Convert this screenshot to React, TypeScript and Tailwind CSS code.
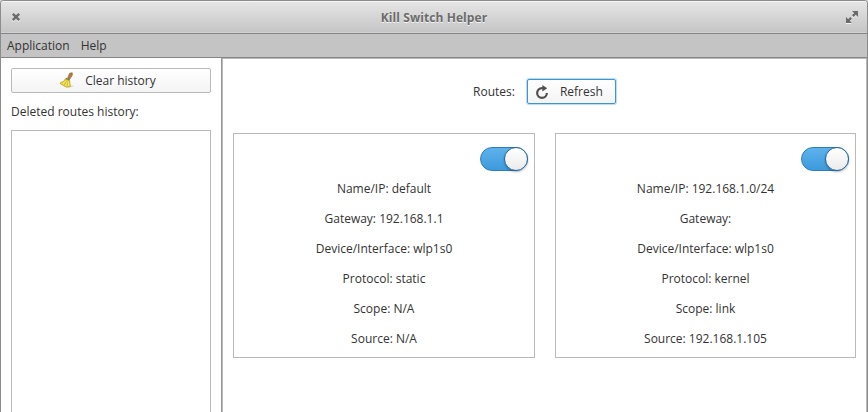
type Route = { name: string; gateway: string; device: string; protocol: string; scope: string; source: string };

const routes: Route[] = [
  { name: "default", gateway: "192.168.1.1", device: "wlp1s0", protocol: "static", scope: "N/A", source: "N/A" },
  { name: "192.168.1.0/24", gateway: "", device: "wlp1s0", protocol: "kernel", scope: "link", source: "192.168.1.105" },
];

function CloseIcon() {
  return (
    <svg className="h-[10px] w-[10px]" viewBox="0 0 10 10">
      <path d="M1.8 2.8 8.2 9.2M8.2 2.8 1.8 9.2" stroke="#f4f4f4" strokeWidth="2.2" />
      <path d="M1.8 1.8 8.2 8.2M8.2 1.8 1.8 8.2" stroke="#6b6b6b" strokeWidth="2.5" />
    </svg>
  );
}

function ExpandShape({ color }: { color: string }) {
  return (
    <g>
      <path d="M6 0h6v6zM0 6v6h6z" fill={color} />
      <path d="M6.8 5.2 10 2M5.2 6.8 2 10" stroke={color} strokeWidth="2.4" />
    </g>
  );
}

function ExpandIcon() {
  return (
    <svg className="h-[13px] w-[12px]" viewBox="0 0 12 13">
      <g transform="translate(0 1)"><ExpandShape color="#f4f4f4" /></g>
      <ExpandShape color="#6b6b6b" />
    </svg>
  );
}

function BroomIcon() {
  return (
    <svg className="h-4 w-4 -translate-y-px" viewBox="0 0 16 16">
      <ellipse cx="10" cy="14.2" rx="4.5" ry="1.1" fill="#dedede" />
      <path d="M10.5 1.2 13.2.7 13.4 3 10.8 7.2 8.7 6.2z" fill="#b57b3d" stroke="#946332" strokeWidth=".6" />
      <path d="M7.2 5.7 11 7.3 10.4 9 6.2 7.2z" fill="#777a54" />
      <path d="M6.2 7 10.7 8.8 11.3 14.7 7.5 15.2 1.4 11.8 1.5 10.5 4.5 9.5z" fill="#e9d43e" stroke="#b49f25" strokeWidth=".7" />
      <path d="m6.5 9-2.7 3M8 9.7l-1.2 4M9.5 10l-.2 4" stroke="#fff08a" strokeWidth=".8" />
      <path d="m7.3 9.3-2 3.7M8.8 10l-.8 4.3" stroke="#b8a528" strokeWidth=".5" />
    </svg>
  );
}

function RefreshIcon() {
  return (
    <svg className="h-[14px] w-[13px]" viewBox="0 0 13 14">
      <path d="M7.2 3.1H6a4.85 4.85 0 1 0 4.85 4.85" fill="none" stroke="#505050" strokeWidth="2.2" />
      <path d="M6.4 0 11.2 3.2 6.4 6.4z" fill="#505050" />
    </svg>
  );
}

function Switch() {
  return (
    <div className="relative h-6 w-12 rounded-full border border-[#2d7db8] bg-linear-to-b from-[#5db2ea] to-[#3d9add]">
      <div className="absolute -top-px -right-px h-6 w-6 rounded-full border border-[#2467a0] bg-linear-to-b from-white to-[#ebebeb] shadow-[0_1px_2px_rgba(0,0,0,0.3)]" />
    </div>
  );
}

function RouteCard({ route, className }: { route: Route; className: string }) {
  const rows = [
    `Name/IP: ${route.name}`,
    `Gateway: ${route.gateway}`,
    `Device/Interface: ${route.device}`,
    `Protocol: ${route.protocol}`,
    `Scope: ${route.scope}`,
    `Source: ${route.source}`,
  ];
  return (
    <section className={`h-[225px] shrink-0 border border-[#bababa] pt-[13px] ${className}`}>
      <div className="flex justify-end pr-1.5"><Switch /></div>
      <div className="mt-[3px] text-center leading-[30px]">
        {rows.map((r) => <p key={r}>{r}</p>)}
      </div>
    </section>
  );
}

export default function App() {
  return (
    <div className="h-[412px] w-[868px] overflow-hidden bg-[#d8d8d8] font-['Open_Sans',sans-serif] text-[12px] text-[#333]">
      <div className="flex h-full flex-col overflow-hidden rounded-t-[4px] border-x border-t border-[#8c8c8c] bg-white">
        <header className="flex h-[33px] shrink-0 items-center justify-between border-b border-[#858585] bg-linear-to-b from-[#e6e6e6] to-[#c4c4c4] pr-[9px] pl-[10px] shadow-[inset_0_1px_0_#f5f5f5,inset_0_-1px_0_#d0d0d0]">
          <CloseIcon />
          <h1 className="pt-px pl-px font-bold tracking-[0.08px] text-[#6b6b6b] [text-shadow:0_1px_0_#f4f4f4]">Kill Switch Helper</h1>
          <ExpandIcon />
        </header>
        <nav className="flex h-6 shrink-0 items-center gap-[11px] border-b border-[#858585] bg-[#c4c4c4] pl-1.5">
          <span>Application</span>
          <span>Help</span>
        </nav>
        <div className="flex min-h-0 flex-1">
          <aside className="flex w-[220px] shrink-0 flex-col px-[10px] pt-[10px]">
            <button className="flex h-[25px] shrink-0 items-center justify-center gap-[10px] rounded-[2px] border border-[#bababa] bg-linear-to-b from-white to-[#f4f4f4] pr-[7px]">
              <BroomIcon />
              <span>Clear history</span>
            </button>
            <p className="mt-[10px] leading-[18px]">Deleted routes history:</p>
            <div className="mt-[9px] flex-1 border border-b-0 border-[#bababa]" />
          </aside>
          <div className="flex flex-1 border-l border-[#979797]">
            <main className="flex-1 border-x border-t border-[#bababa] pt-5">
              <div className="flex items-center justify-center gap-3">
                <span>Routes:</span>
                <button className="flex h-[25px] w-[89px] items-center rounded-[2px] border border-[#3d94db] bg-linear-to-b from-white to-[#f4f4f4] pl-2 shadow-[0_0_1px_1px_#b7daf4]">
                  <RefreshIcon />
                  <span className="ml-[11px]">Refresh</span>
                </button>
              </div>
              <div className="mt-[29px] flex gap-5 pl-[10px]">
                <RouteCard route={routes[0]} className="w-[302px]" />
                <RouteCard route={routes[1]} className="w-[301px]" />
              </div>
            </main>
          </div>
        </div>
      </div>
    </div>
  );
}
